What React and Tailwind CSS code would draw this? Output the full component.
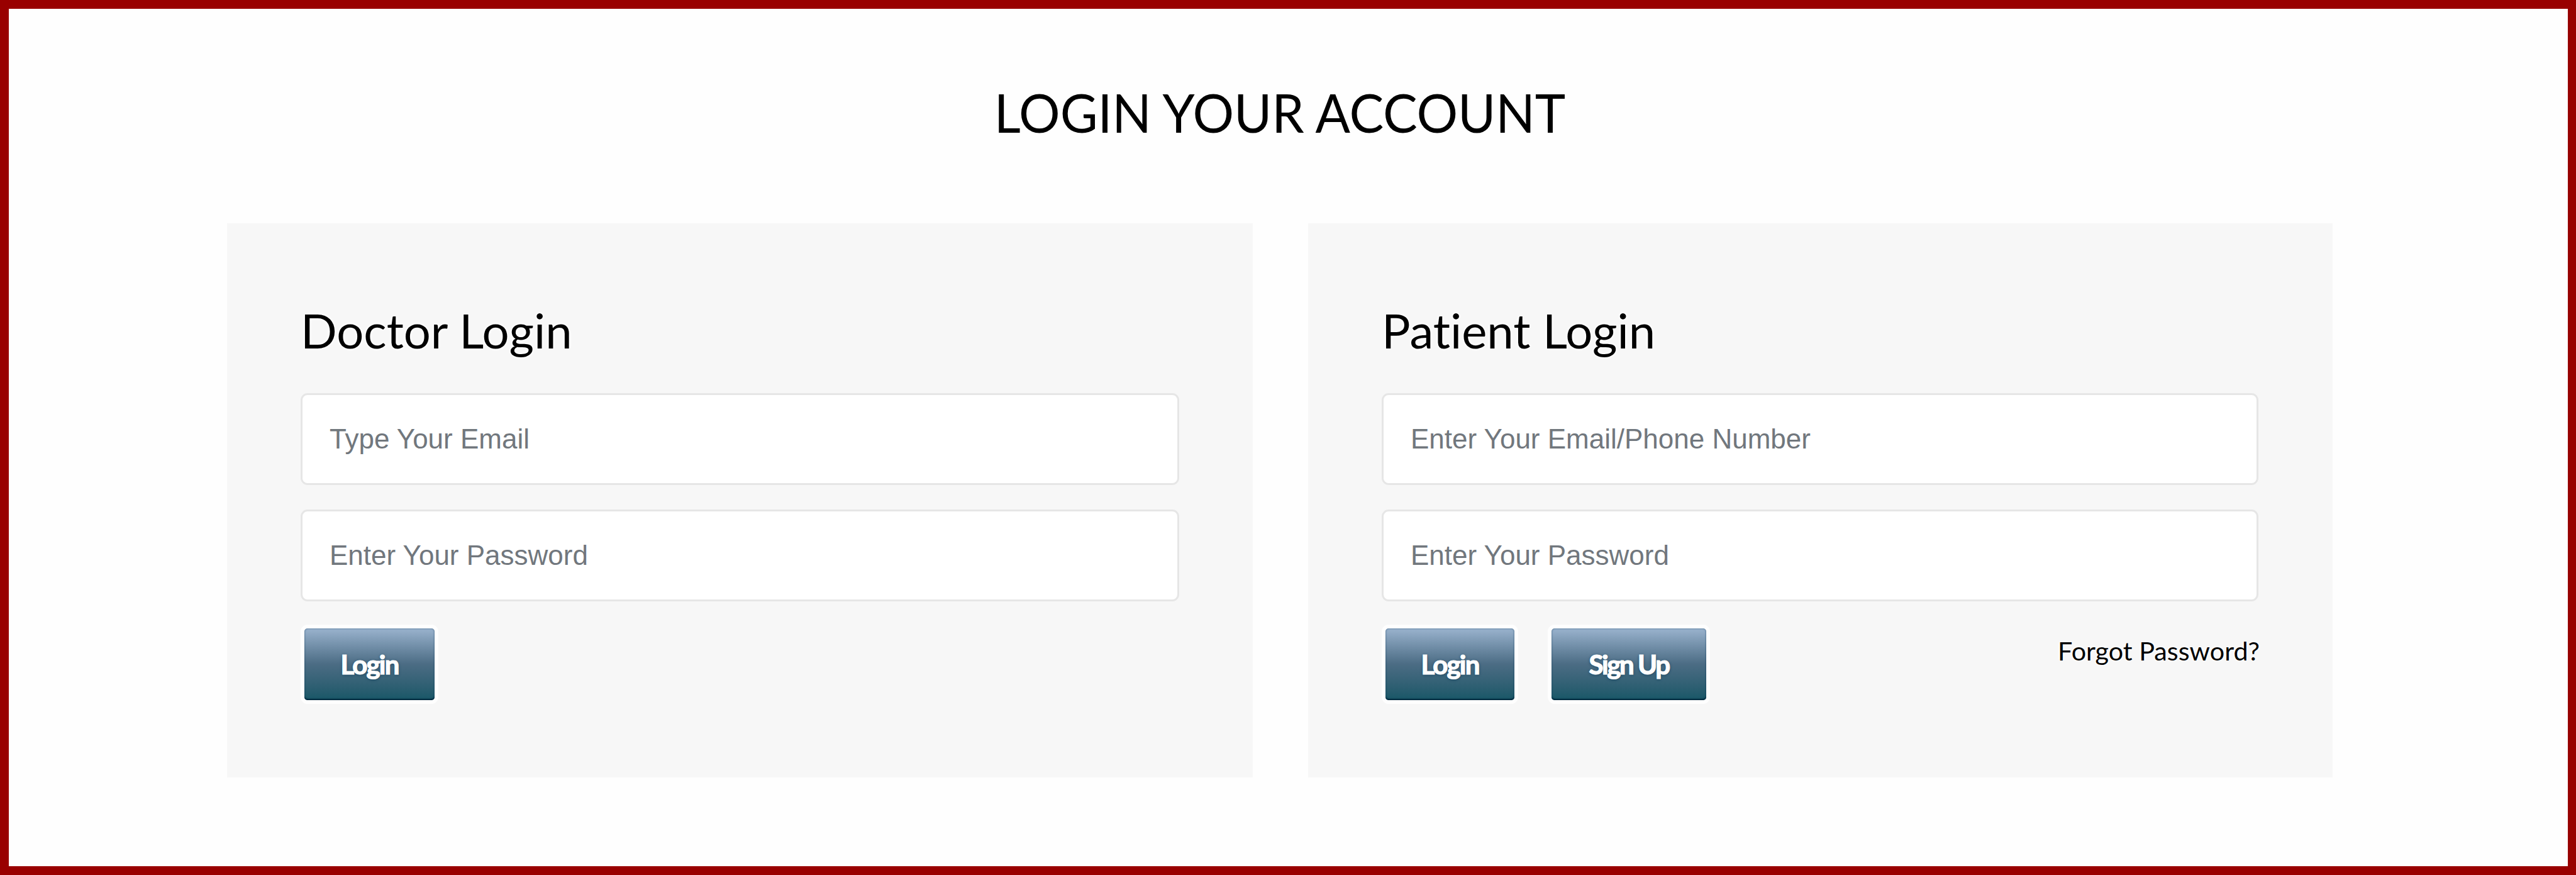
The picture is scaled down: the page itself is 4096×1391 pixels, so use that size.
const haloText =
  "[text-shadow:0_0_4px_#fff,0_0_4px_#fff,0_0_6px_#fff]";

function Field({ type, placeholder }) {
  return (
    <input
      type={type}
      placeholder={placeholder}
      className="block h-[146px] w-full rounded-[11px] border-[3px] border-[#e6e6e6] bg-white pb-px pl-[43px] font-['Liberation_Sans',Arial,sans-serif] text-[44px] leading-[60px] text-[#71777d] placeholder:text-[#71777d] placeholder:opacity-100"
    />
  );
}

function Button({ children, className }) {
  return (
    <button
      className={`h-[114px] rounded-[5px] bg-linear-to-b from-[#9ab3ce] via-[#4b6c84] to-[#175767] text-center text-[42px] leading-[60px] font-bold text-white [-webkit-text-stroke:1.2px_#fff] [box-shadow:0_0_0_6px_#fefefe,inset_0_-3px_2px_-1px_#00263c,inset_0_0_3px_rgba(0,50,85,0.6)] [text-shadow:0_1px_4px_#123f5c] ${className}`}
    >
      {children}
    </button>
  );
}

function Panel({ title, className, children }) {
  return (
    <section className={`h-[881px] bg-[#f7f7f7] pt-[124px] ${className}`}>
      <h2 className={`mb-[54px] text-[76px] leading-[92px] ${haloText}`}>{title}</h2>
      {children}
    </section>
  );
}

export default function App() {
  return (
    <main className="h-[1391px] w-[4096px] overflow-hidden border-14 border-r-13 border-[#990000] bg-[#fefefe] pt-[115px] font-['Lato',sans-serif] text-black [font-variant-ligatures:none]">
      <div className="ml-[347px] w-[3348px]">
        <h1 className="mb-[126px] origin-[50%_82%] scale-y-[1.04] text-center text-[82px] leading-[100px] tracking-[-0.1px]">
          LOGIN YOUR ACCOUNT
        </h1>
        <div className="flex justify-between">
          <Panel title="Doctor Login" className="w-[1631px] pr-[117px] pl-[117px]">
            <div className="flex flex-col gap-[39px]">
              <Field type="email" placeholder="Type Your Email" />
              <Field type="password" placeholder="Enter Your Password" />
            </div>
            <div className="mt-[43px] flex pl-[6px]">
              <Button className="w-[207px] tracking-[-1.8px]">Login</Button>
            </div>
          </Panel>
          <Panel title="Patient Login" className="w-[1629px] pr-[118px] pl-[117px]">
            <div className="flex flex-col gap-[39px]">
              <Field type="text" placeholder="Enter Your Email/Phone Number" />
              <Field type="password" placeholder="Enter Your Password" />
            </div>
            <div className="mt-[43px] flex items-start pl-[6px]">
              <Button className="w-[205px] tracking-[-1.8px]">Login</Button>
              <Button className="ml-[59px] w-[246px] tracking-[-2.4px]">Sign Up</Button>
              <a href="#" className={`mt-[5px] -mr-[2px] ml-auto text-[41.3px] leading-[60px] ${haloText}`}>
                Forgot Password?
              </a>
            </div>
          </Panel>
        </div>
      </div>
    </main>
  );
}
